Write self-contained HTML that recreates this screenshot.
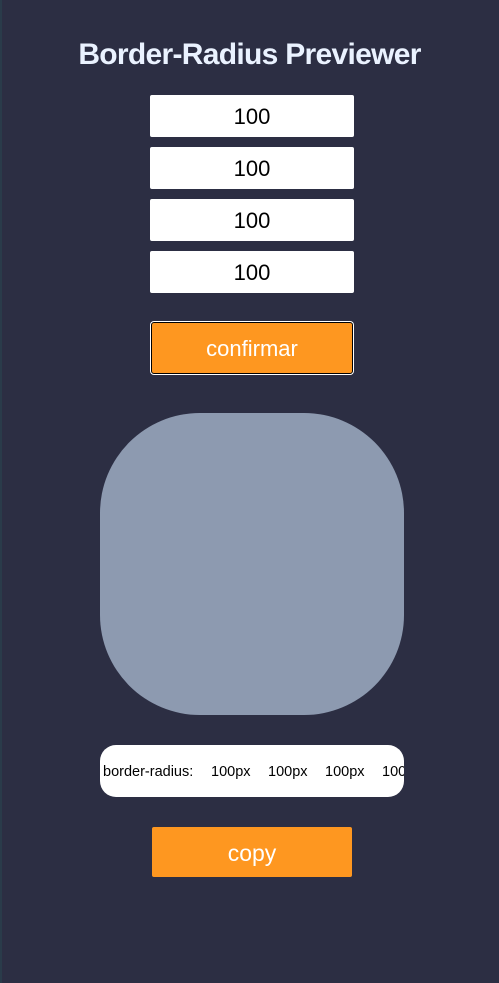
<!DOCTYPE html>
<html><head><style>
body{margin:0;width:499px;height:983px;background:#2c2e43;font-family:"Liberation Sans",sans-serif;position:relative;overflow:hidden}
.a{position:absolute}
h1{position:absolute;top:38px;left:0;width:499px;margin:0;text-align:center;font-size:30px;font-weight:bold;color:#eaf2ff;letter-spacing:-0.7px}
.in{left:150px;width:204px;height:42px;background:#fff;border-radius:2px;text-align:center;line-height:43px;font-size:22px;color:#000}
.t span{position:absolute;top:0}
</style></head><body>
<div class="a" style="left:0;top:0;width:2px;height:983px;background:#2a3b4a"></div>
<h1>Border-Radius Previewer</h1>
<div class="a in" style="top:95px">100</div>
<div class="a in" style="top:147px">100</div>
<div class="a in" style="top:199px">100</div>
<div class="a in" style="top:251px">100</div>
<div class="a" style="left:151px;top:322px;width:200px;height:50px;background:#fe9720;border:1px solid #000;border-radius:3px;color:#fff;font-size:22px;text-align:center;line-height:52px;box-shadow:0 0 0 1px #fff">confirmar</div>
<div class="a" style="left:100px;top:413px;width:304px;height:302px;background:#8d9ab0;border-radius:100px"></div>
<div class="a t" style="left:100px;top:745px;width:304px;height:52px;background:#fff;border-radius:16px;overflow:hidden;white-space:nowrap;font-size:14.5px;line-height:54px;color:#000"><span style="left:3px">border-radius:</span><span style="left:111px">100px</span><span style="left:168px">100px</span><span style="left:225px">100px</span><span style="left:282px">100px</span></div>
<div class="a" style="left:152px;top:827px;width:200px;height:50px;background:#fe9720;border-radius:2px;color:#fff;font-size:23px;text-align:center;line-height:52px">copy</div>
</body></html>
